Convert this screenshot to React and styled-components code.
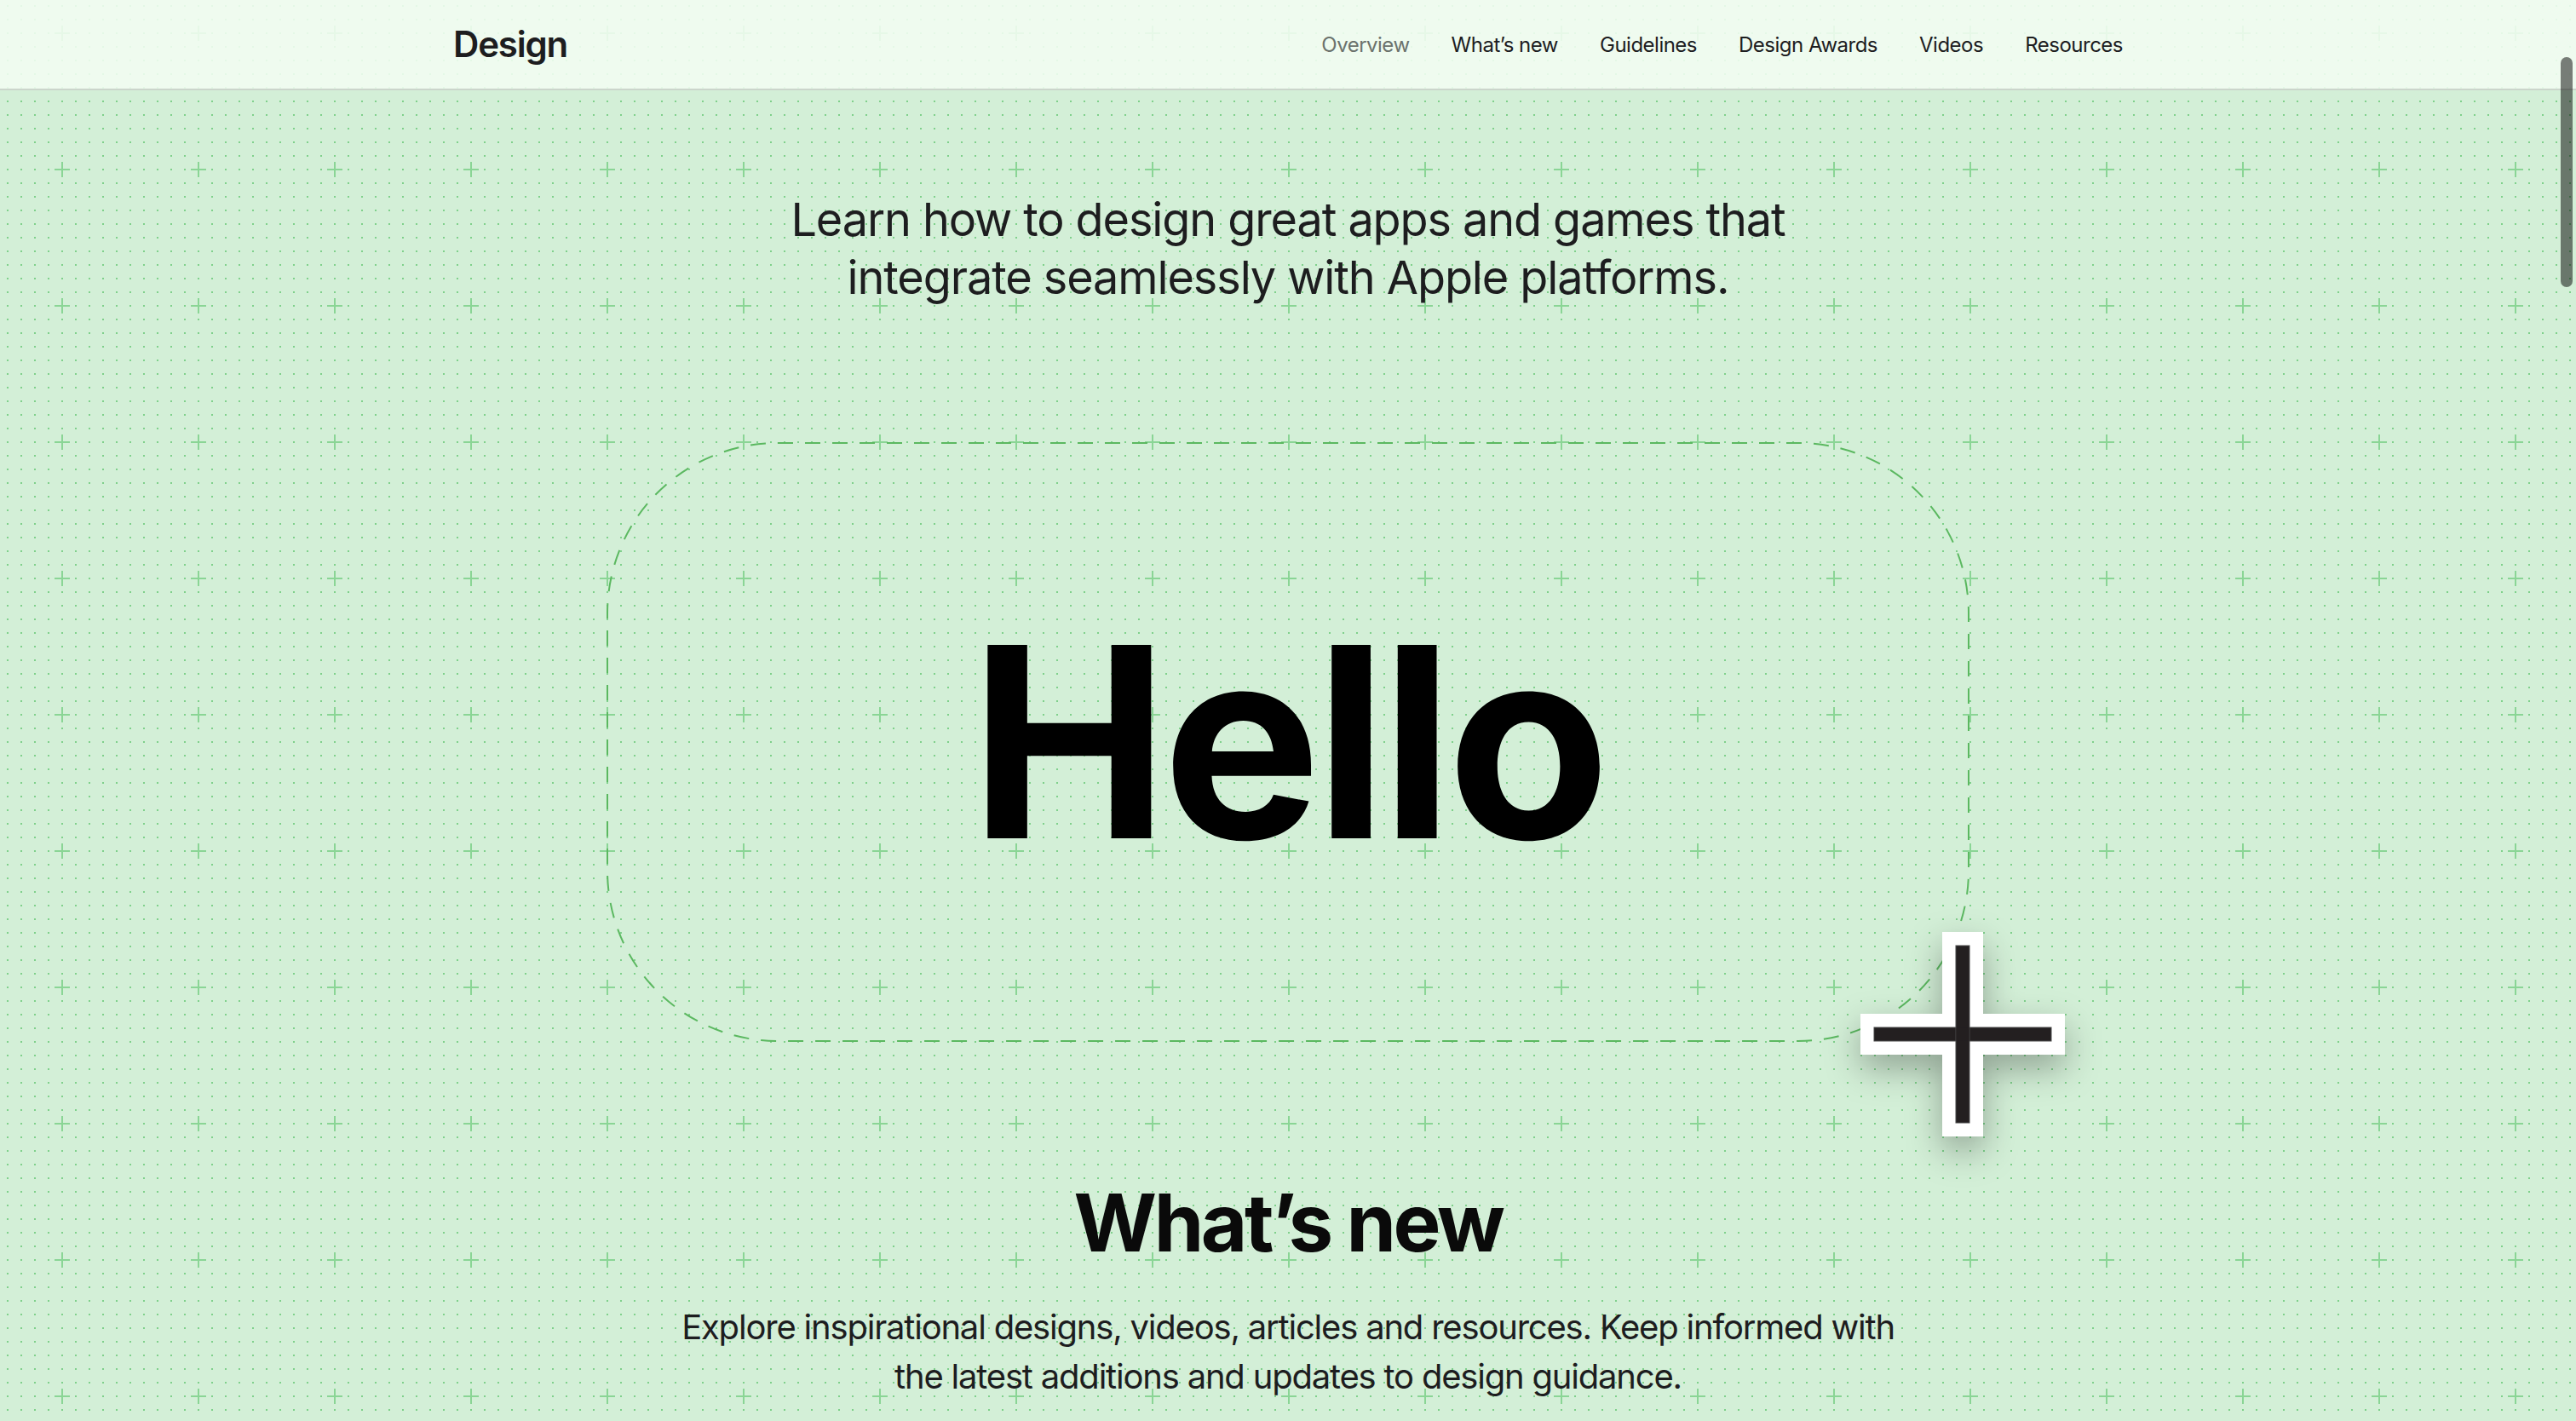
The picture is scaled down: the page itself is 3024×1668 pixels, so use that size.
import React from 'react';
import styled, { createGlobalStyle } from 'styled-components';

const navLinks = ['Overview', 'What’s new', 'Guidelines', 'Design Awards', 'Videos', 'Resources'];

// 160px tile: a dot every 16px and a small cross every 160px
const buildGrid = () => {
  let dots = '';
  for (let x = 8; x < 160; x += 16) {
    for (let y = 6; y < 160; y += 16) {
      dots += `<rect x="${x}" y="${y}" width="2" height="2"/>`;
    }
  }
  const svg = `<svg xmlns="http://www.w3.org/2000/svg" width="160" height="160"><g fill="#7fd08b">${dots}</g><g fill="#8ad595"><rect x="72" y="30" width="2" height="18"/><rect x="64" y="38" width="18" height="2"/></g></svg>`;
  return `url("data:image/svg+xml,${encodeURIComponent(svg)}")`;
};

const GlobalStyle = createGlobalStyle`
  html, body {
    margin: 0;
    height: 100%;
    overflow: hidden;
  }
  body {
    background-color: #d3efd7;
    background-image: ${buildGrid()};
    background-position: 0 0;
    font-family: Inter, 'Noto Sans', 'Liberation Sans', sans-serif;
    color: #1d1d1f;
  }
`;

const App = () => {
  return (
    <>
      <GlobalStyle />
      <NavBar>
        <NavInner>
          <Brand>Design</Brand>
          <NavList>
            {navLinks.map((link, i) => (
              <NavLink key={link} current={i === 0}>
                {link}
              </NavLink>
            ))}
          </NavList>
        </NavInner>
      </NavBar>
      <Main>
        <Intro>
          Learn how to design great apps and games that
          <br />
          integrate seamlessly with Apple platforms.
        </Intro>
        <Stage>
          <DashedFrame viewBox='0 0 1600 704' preserveAspectRatio='none'>
            <rect
              x='1'
              y='1'
              width='1598'
              height='702'
              rx='200'
              ry='200'
              fill='none'
              stroke='#5bb860'
              strokeWidth='2'
              strokeDasharray='18 14'
            />
          </DashedFrame>
          <Hello>Hello</Hello>
          <Cursor viewBox='0 0 240 240'>
            <path
              d='M96 0 H144 V96 H240 V144 H144 V240 H96 V144 H0 V96 H96 Z'
              fill='#ffffff'
            />
            <rect x='16' y='112' width='208' height='16' fill='#231f20' stroke='#4a4a4a' strokeWidth='1' />
            <rect x='112' y='16' width='16' height='208' fill='#231f20' stroke='#4a4a4a' strokeWidth='1' />
            <rect x='112.5' y='112.5' width='15' height='15' fill='#231f20' />
          </Cursor>
        </Stage>
        <SectionTitle>What’s new</SectionTitle>
        <SectionText>
          Explore inspirational designs, videos, articles and resources. Keep informed with
          <br />
          the latest additions and updates to design guidance.
        </SectionText>
      </Main>
      <ScrollThumb />
    </>
  );
};

const NavBar = styled.header`
  height: 106px;
  box-sizing: border-box;
  background: rgba(242, 253, 243, 0.88);
  border-bottom: 2px solid rgba(0, 0, 0, 0.15);
  display: flex;
  justify-content: center;
`;

const NavInner = styled.nav`
  width: 1960px;
  display: flex;
  align-items: center;
  justify-content: space-between;
`;

const Brand = styled.div`
  font-size: 42px;
  font-weight: 600;
  letter-spacing: -1.2px;
  color: #1d1d1f;
  margin-top: -2px;
`;

const NavList = styled.ul`
  display: flex;
  gap: 49px;
  margin: 0;
  padding: 0;
  list-style: none;
`;

const NavLink = styled.li`
  font-size: 24px;
  font-weight: 400;
  letter-spacing: -0.5px;
  color: ${({ current }) => (current ? '#6b726c' : '#1d1d1f')};
`;

const Main = styled.main`
  display: flex;
  flex-direction: column;
  align-items: center;
`;

const Intro = styled.h2`
  margin: 118px 0 0;
  font-size: 54px;
  line-height: 68px;
  font-weight: 400;
  letter-spacing: -1.1px;
  text-align: center;
  color: #1d1d1f;
`;

const Stage = styled.div`
  position: relative;
  margin-top: 159px;
  width: 1600px;
  height: 704px;
  display: flex;
  align-items: center;
  justify-content: center;
`;

const DashedFrame = styled.svg`
  position: absolute;
  inset: 0;
  width: 100%;
  height: 100%;
  overflow: visible;
`;

const Hello = styled.div`
  position: relative;
  font-size: 312px;
  line-height: 1;
  font-weight: 700;
  letter-spacing: -7px;
  color: #000;
  margin-left: -2px;
`;

const Cursor = styled.svg`
  position: absolute;
  left: 1472px;
  top: 575px;
  width: 240px;
  height: 240px;
  filter: drop-shadow(0 16px 20px rgba(0, 0, 0, 0.32));
`;

const SectionTitle = styled.h2`
  margin: 160px 0 0;
  font-size: 94px;
  line-height: 104px;
  font-weight: 700;
  letter-spacing: -3.4px;
  color: #0a0a0a;
`;

const SectionText = styled.p`
  margin: 42px 0 0;
  font-size: 40px;
  line-height: 58px;
  font-weight: 400;
  letter-spacing: -1.2px;
  text-align: center;
  white-space: nowrap;
  color: #1d1d1f;
`;

const ScrollThumb = styled.div`
  position: fixed;
  top: 67px;
  right: 4px;
  width: 14px;
  height: 270px;
  border-radius: 7px;
  background: rgba(0, 0, 0, 0.5);
`;

export default App;
